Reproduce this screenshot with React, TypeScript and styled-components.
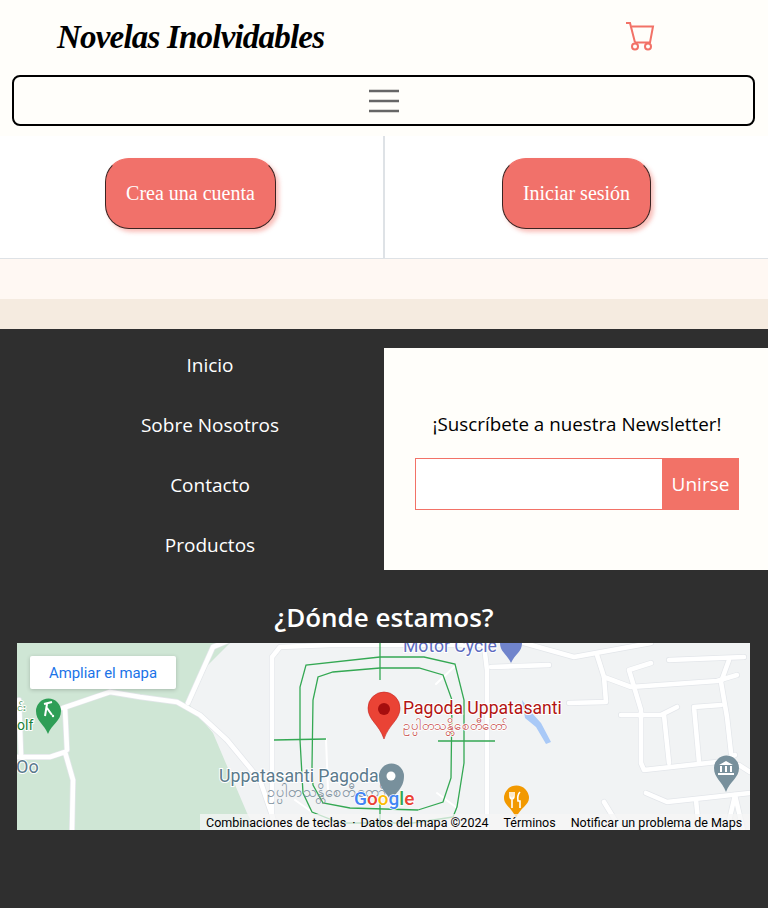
import styled, { createGlobalStyle } from 'styled-components';

const coral = '#f27267';
const cream = '#fffefa';
const uiFont = `"Open Sans", "Noto Sans", sans-serif`;
const mapFont = `Roboto, "Noto Sans", sans-serif`;
const burmeseFont = `"Noto Sans", "DejaVu Sans", sans-serif`;

const GlobalStyle = createGlobalStyle`
  * { box-sizing: border-box; }
  body {
    margin: 0;
    background: #2f2f2f;
    font-family: ${uiFont};
  }
`;

const Header = styled.header`
  display: flex;
  justify-content: space-between;
  align-items: center;
  height: 75px;
  padding: 0 112px 0 57px;
  background: ${cream};
`;

const Logo = styled.h1`
  margin: 0;
  font-family: "Liberation Serif", serif;
  font-style: italic;
  font-weight: 700;
  font-size: 33px;
  letter-spacing: -0.8px;
  white-space: nowrap;
  color: #000;
`;

const NavBar = styled.nav`
  background: ${cream};
  padding: 0 12px 10px 12px;
  width: 100%;
`;

const Toggler = styled.button`
  display: flex;
  align-items: center;
  justify-content: center;
  width: 743px;
  height: 51px;
  background: none;
  border: 2px solid #000;
  border-radius: 8px;
  padding: 0;
`;

const AuthRow = styled.section`
  display: grid;
  grid-template-columns: 385px 383px;
  height: 123px;
  background: #fff;
  border-bottom: 1px solid #dee2e6;
`;

const AuthCell = styled.div<{ $divider?: boolean }>`
  display: flex;
  align-items: center;
  justify-content: center;
  padding-bottom: 7px;
  padding-right: ${(p) => (p.$divider ? '2px' : '0')};
  border-right: ${(p) => (p.$divider ? '2px solid #dee2e6' : 'none')};
`;

const AuthButton = styled.button<{ $w: number }>`
  width: ${(p) => p.$w}px;
  height: 71px;
  background: #f1716a;
  color: #fff;
  border: 1px solid #3a2422;
  border-top-color: #f1716a;
  border-radius: 24px;
  box-shadow: 3px 3px 4px rgba(242, 114, 103, 0.45);
  font-family: "Liberation Serif", serif;
  font-size: 20px;
  padding: 0;
`;

const Band = styled.div<{ $h: number; $bg: string }>`
  height: ${(p) => p.$h}px;
  background: ${(p) => p.$bg};
`;

const Footer = styled.footer`
  background: #2f2f2f;
  padding-bottom: 78px;
`;

const FooterTop = styled.div`
  display: grid;
  grid-template-columns: 384px 384px;
  padding-top: 19px;
`;

const LinkList = styled.ul`
  list-style: none;
  margin: -19px 0 0 0;
  padding: 6px 0 0 36px;
  display: flex;
  flex-direction: column;
`;

const LinkItem = styled.li`
  height: 60px;
  line-height: 60px;
  text-align: center;
  color: #fff;
  font-size: 19px;
`;

const Newsletter = styled.div`
  height: 222px;
  background: ${cream};
  padding: 60px 29px 0 31px;
`;

const NewsTitle = styled.p`
  margin: 0 0 18px 0;
  height: 32px;
  line-height: 32px;
  text-align: center;
  font-size: 18.8px;
  color: #000;
`;

const SubscribeForm = styled.form`
  display: flex;
  height: 52px;
`;

const EmailInput = styled.input`
  flex: 1;
  min-width: 0;
  border: 1px solid ${coral};
  border-right: none;
  background: #fff;
`;

const JoinButton = styled.button`
  width: 77px;
  background: ${coral};
  border: none;
  color: #fff;
  font-family: ${uiFont};
  font-size: 19px;
  padding: 0;
`;

const WhereTitle = styled.h2`
  margin: 23px 0 6px 0;
  height: 39px;
  line-height: 39px;
  text-align: center;
  font-size: 26px;
  font-weight: 600;
  color: #fff;
`;

const MapFrame = styled.div`
  position: relative;
  margin-left: 17px;
  width: 733px;
  height: 187px;
  overflow: hidden;
  background: #f1f3f4;
`;

const MapArt = styled.svg`
  display: block;
`;

const ExpandLink = styled.a`
  position: absolute;
  left: 13px;
  top: 13px;
  width: 146px;
  height: 33px;
  display: flex;
  align-items: center;
  justify-content: center;
  background: #fff;
  border-radius: 2px;
  box-shadow: 0 1px 4px rgba(0, 0, 0, 0.2);
  color: #1a73e8;
  font-family: ${mapFont};
  font-size: 14.9px;
`;

const Attribution = styled.div`
  position: absolute;
  right: 0;
  bottom: 0;
  width: 550px;
  height: 16px;
  display: flex;
  align-items: center;
  background: rgba(245, 245, 245, 0.75);
  padding-left: 6px;
  font-family: ${mapFont};
  font-size: 12.5px;
  color: #000;
  white-space: nowrap;
`;

const AttrItem = styled.span<{ $gap: number }>`
  margin-right: ${(p) => p.$gap}px;
`;

const roads = [
  'M63 708 L110 692 L140 697 L177 702 L200 715 L227 740 L260 780 L277 830',
  'M188 703 L213 647 L230 640',
  'M65 708 L67 750 M18 757 L50 757 L65 752 L73 780 L72 830',
  'M19 700 L21 755',
  'M272 830 L272 657 L280 647 L330 645 L484 645 L487 670 L487 830',
  'M491 667 L549 665',
  'M524 643 L574 657 L651 643',
  'M597 655 L604 677 L606 702 L569 703',
  'M604 677 L631 687 L717 681 L737 675',
  'M651 663 L629 670 L641 710 L641 763 L644 770 L717 762 L735 755',
  'M669 660 L744 657',
  'M729 660 L721 682 L727 717 L731 753',
  'M621 715 L661 715 L677 707',
  'M664 715 L669 763',
  'M721 705 L694 707 L699 762',
  'M646 793 L667 802 L750 793',
  'M696 800 L699 830 M735 795 L727 830 M735 795 L743 830',
  'M604 802 L621 830',
  'M739 765 L750 772',
];

const thinRoads = [
  'M436 684 L455 666',
  'M437 793 L457 808',
  'M326 739 L328 790',
  'M295 800 L312 812',
];

function App() {
  return (
    <>
      <GlobalStyle />
      <Header>
        <Logo>Novelas Inolvidables</Logo>
        <svg width="32" height="32" viewBox="0 0 32 32" fill="none" stroke={coral} strokeWidth="2">
          <path d="M2 .9H6L11 20.5" />
          <path d="M7.5 4.5H29L26 20.5H11" />
          <circle cx="11" cy="24.5" r="3" />
          <circle cx="24" cy="24.5" r="3" />
        </svg>
      </Header>
      <NavBar>
        <Toggler aria-label="menu">
          <svg width="30" height="30" viewBox="0 0 30 30" stroke="#666" strokeWidth="2.4">
            <path d="M0 5H30M0 15H30M0 25H30" />
          </svg>
        </Toggler>
      </NavBar>
      <AuthRow>
        <AuthCell $divider>
          <AuthButton $w={171}>Crea una cuenta</AuthButton>
        </AuthCell>
        <AuthCell>
          <AuthButton $w={149}>Iniciar sesión</AuthButton>
        </AuthCell>
      </AuthRow>
      <Band $h={40} $bg="#fff8f3" />
      <Band $h={30} $bg="#f5ebe0" />
      <Footer>
        <FooterTop>
          <LinkList>
            <LinkItem>Inicio</LinkItem>
            <LinkItem>Sobre Nosotros</LinkItem>
            <LinkItem>Contacto</LinkItem>
            <LinkItem>Productos</LinkItem>
          </LinkList>
          <Newsletter>
            <NewsTitle>¡Suscríbete a nuestra Newsletter!</NewsTitle>
            <SubscribeForm>
              <EmailInput type="email" />
              <JoinButton type="button">Unirse</JoinButton>
            </SubscribeForm>
          </Newsletter>
        </FooterTop>
        <WhereTitle>¿Dónde estamos?</WhereTitle>
        <MapFrame>
          <MapArt width="733" height="187" viewBox="17 643 733 187" fontFamily={mapFont}>
            <path d="M17 643 H230 L203 670 L188 703 L213 733 L247 813 L256 830 H17 Z" fill="#cfe6d5" />
            <g fill="none" stroke="#e3e6ea" strokeWidth="6" strokeLinejoin="round" strokeLinecap="round">
              {roads.map((d) => <path key={d} d={d} />)}
            </g>
            <g fill="none" stroke="#fff" strokeWidth="4.6" strokeLinejoin="round" strokeLinecap="round">
              {roads.map((d) => <path key={d} d={d} />)}
            </g>
            <g fill="none" stroke="#fff" strokeWidth="2" strokeLinecap="round">
              {thinRoads.map((d) => <path key={d} d={d} />)}
            </g>
            <path d="M522 700 L531 712 L541 723 L551 742 L546 744 L536 727 L525 718 Z" fill="#a9c9f7" />
            <g fill="none" stroke="#34a853" strokeWidth="1.3">
              <path d="M380 643 V680" />
              <path d="M380 657 L306 665 L300 687 V740 L303 793 L312 812 L340 823 H413 L453 817" />
              <path d="M380 657 H424 L455 664 L464 700 V763 L457 807 L453 817" />
              <path d="M380 668 L333 672 L318 677 L313 700 L312 767 L313 785 L323 803 L350 808 L418 810" />
              <path d="M380 668 H419 L443 675 L452 700 L451 778 L443 802 L418 810" />
              <path d="M274 740 L326 739 M438 741 H495" />
              <path d="M380 803 V830" />
            </g>
            <text x="403" y="652" fontSize="17.6" fill="#5c6bc0" stroke="#fff" strokeWidth="2" paintOrder="stroke">Motor Cycle</text>
            <path d="M511 663 C507 654 500 652 500 643 H522 C522 652 515 654 511 663Z" fill="#7084cc" />
            <text x="16" y="773" fontSize="18" fill="#5b7a8c" stroke="#fff" strokeWidth="2" paintOrder="stroke">Oo</text>
            <text x="17" y="711" fontSize="11" fill="#188038" stroke="#fff" strokeWidth="2" paintOrder="stroke" fontFamily={burmeseFont}>င်း</text>
            <text x="17" y="730" fontSize="14" fill="#188038" stroke="#fff" strokeWidth="2" paintOrder="stroke">olf</text>
            <path d="M48 734 C44 724 36 721 36 711 A12.5 12.5 0 0 1 61 711 C61 721 52 724 48 734Z" fill="#2e9e56" />
            <path d="M44 704 L52 702 M47 704 L45 716 M47 708 L52 715" stroke="#fff" strokeWidth="2" fill="none" />
            <circle cx="53" cy="716" r="1.2" fill="#fff" />
            <text x="219" y="782" fontSize="17.7" fill="#5b7a8c" stroke="#fff" strokeWidth="2" paintOrder="stroke">Uppatasanti Pagoda</text>
            <text x="267" y="797" fontSize="14.4" fill="#7c8f9c" fontFamily={burmeseFont}>ဥပ္ပါတသန္တိစေတီတော်</text>
            <path d="M391 802 C387 792 379 789 379 776 A12.5 12.5 0 0 1 404 776 C404 789 395 792 391 802Z" fill="#78909c" />
            <circle cx="391" cy="776" r="4.5" fill="#fff" />
            <text x="354" y="805" fontSize="19" fontWeight="500" stroke="#fff" strokeWidth="1.5" paintOrder="stroke">
              <tspan fill="#4285f4">G</tspan>
              <tspan fill="#ea4335">o</tspan>
              <tspan fill="#fbbc05">o</tspan>
              <tspan fill="#4285f4">g</tspan>
              <tspan fill="#34a853">l</tspan>
              <tspan fill="#ea4335">e</tspan>
            </text>
            <path d="M384 739 C379 724 368 720 368 708 A16 16 0 0 1 400 708 C400 720 389 724 384 739Z" fill="#ea4335" stroke="#c5221f" strokeWidth="0.6" />
            <circle cx="384" cy="709" r="6" fill="#a50e0e" />
            <text x="403" y="714" fontSize="17.6" fill="#b31412" stroke="#fff" strokeWidth="2" paintOrder="stroke">Pagoda Uppatasanti</text>
            <text x="403" y="730" fontSize="13" fill="#c5443f" fontFamily={burmeseFont} stroke="#fff" strokeWidth="1.5" paintOrder="stroke">ဥပ္ပါတသန္တိစေတီတော်</text>
            <path d="M516 818 C512 808 504 805 504 798 A12.5 12.5 0 0 1 529 798 C529 805 520 808 516 818Z" fill="#f29900" />
            <path d="M512 792 V799 M510 792 V796 Q510 799 512 799 Q514 799 514 796 V792 M512 799 V808 M520 792 Q517 795 518 801 H520 V808" stroke="#fff" strokeWidth="1.6" fill="none" />
            <path d="M726 792 C722 781 714 778 714 768 A12.5 12.5 0 0 1 739 768 C739 778 730 781 726 792Z" fill="#78909c" />
            <path d="M719 765 L726 761 L733 765 Z M720 766 H722 V772 H720Z M725 766 H727 V772 H725Z M730 766 H732 V772 H730Z M718 773 H734 V775 H718Z" fill="#fff" />
          </MapArt>
          <ExpandLink>Ampliar el mapa</ExpandLink>
          <Attribution>
            <AttrItem $gap={6}>Combinaciones de teclas</AttrItem>
            <AttrItem $gap={5}>·</AttrItem>
            <AttrItem $gap={15}>Datos del mapa ©2024</AttrItem>
            <AttrItem $gap={15}>Términos</AttrItem>
            <AttrItem $gap={0}>Notificar un problema de Maps</AttrItem>
          </Attribution>
        </MapFrame>
      </Footer>
    </>
  );
}

export default App;
